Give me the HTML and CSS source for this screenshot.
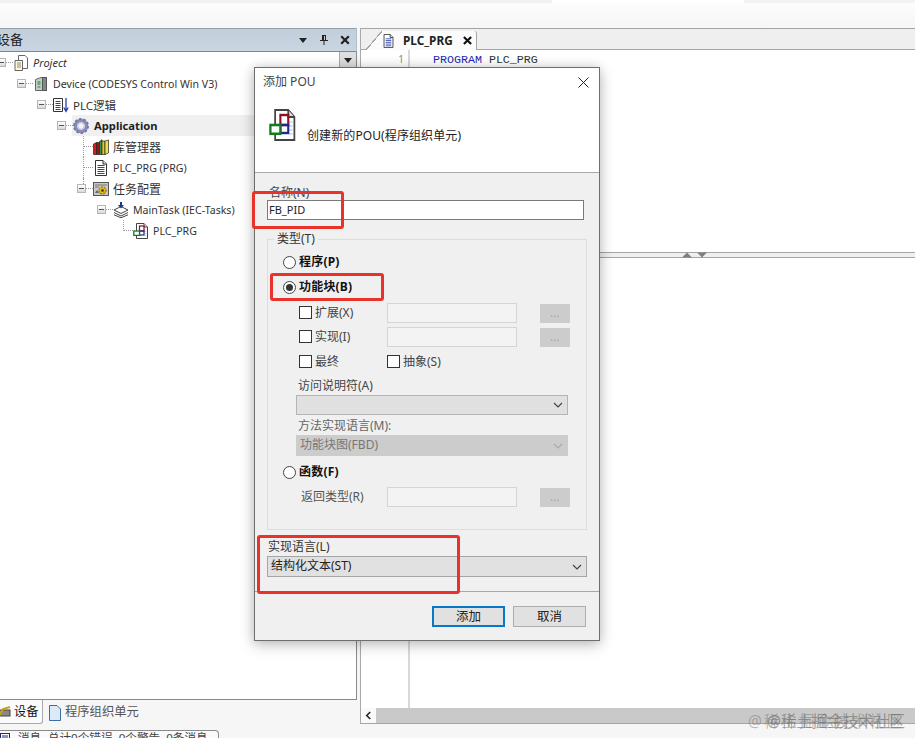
FILE: index.html
```html
<!DOCTYPE html>
<html lang="zh">
<head>
<meta charset="utf-8">
<title>添加 POU</title>
<link rel="stylesheet" href="styles.css">
</head>
<body>
<svg class="defs" width="0" height="0">
  <defs>
    <symbol id="doc" viewBox="0 0 16 16" preserveAspectRatio="none">
      <path d="M2.5 .5H10L13.5 4V15.5H2.5Z" fill="#fff" stroke="#333"/>
      <path d="M10 .5V4H13.5" fill="#ddd" stroke="#333"/>
      <path d="M4.5 5.5H11.5M4.5 7.5H11.5M4.5 9.5H11.5M4.5 11.5H11.5M4.5 13.5H11.5" stroke="#2a3fb0"/>
    </symbol>
    <symbol id="fb" viewBox="0 0 16 16" preserveAspectRatio="none">
      <path d="M3.5 .5H11L14.5 4V15.5H3.5Z" fill="#fff" stroke="#444"/>
      <path d="M11 .5V4H14.5" fill="#ddd" stroke="#444"/>
      <path d="M11.500 6.500H13.500M11.500 8.500H13.500M11.500 10.500H13.500M11.500 12.500H13.500" stroke="#b7b3d8" stroke-width=".6"/>
      <rect x="6.5" y="3" width="4.5" height="5" fill="none" stroke="#8a1220" stroke-width="1.2"/>
      <rect x="6.5" y="8" width="4.5" height="4" fill="none" stroke="#1c2a90" stroke-width="1.2"/>
      <rect x=".8" y="8" width="5.7" height="4.4" fill="#fff" stroke="#157a1e" stroke-width="1.3"/>
    </symbol>
  </defs>
</svg>

<div class="app">
  <div class="topstrip"></div>
  <div class="main">
    <section class="left">
      <header class="panel-head">
        <span class="panel-title">设备</span>
        <span class="panel-tools">
          <svg class="tool" viewBox="0 0 10 10" width="10" height="10"><path d="M1 3H9L5 8Z" fill="#222"/></svg>
          <svg class="tool" viewBox="0 0 10 12" width="10" height="12"><path d="M3 1H7V6H9V7H5.5V11H4.5V7H1V6H3ZM6 2H5V6H6Z" fill="#222"/></svg>
          <svg class="tool" viewBox="0 0 10 10" width="10" height="10"><path d="M1.2 1.2L8.8 8.8M8.8 1.2L1.2 8.8" stroke="#222" stroke-width="2.2"/></svg>
        </span>
      </header>
      <div class="tree">
        <button class="tree-drop"><svg viewBox="0 0 10 10" width="10" height="10"><path d="M1 3H9L5 8Z" fill="#222"/></svg></button>
        <div class="row l0"><i class="exp"></i><i class="conn"></i>
          <svg class="ic" viewBox="0 0 16 16"><path d="M5.500 .5H12L14.500 3V13.500H5.500Z" fill="#fff" stroke="#666"/><path d="M2 5.500H9.500V15.500H2Z" fill="#fff8dc" stroke="#666"/><path d="M4 8H8M4 10H8M4 12H8" stroke="#888"/></svg>
          <span class="it">Project</span></div>
        <div class="row l1"><i class="exp"></i><i class="conn"></i>
          <svg class="ic" viewBox="0 0 16 16"><path d="M2.500 3.500L8 1.500L13.500 1.500V14.500H2.500Z" fill="#c3ccc6" stroke="#666"/><rect x="9.500" y="1.500" width="4" height="13" fill="#7f8a88" stroke="#555"/><rect x="4.500" y="5" width="3" height="4" fill="#5fae78"/><path d="M4.500 11H7.500" stroke="#666"/></svg>
          <span class="lat">Device (CODESYS Control Win V3)</span></div>
        <div class="row l2"><i class="exp"></i><i class="conn"></i>
          <svg class="ic" viewBox="0 0 16 16"><path d="M.5 1.500H9.500V14.500H.5Z" fill="#fff" stroke="#333"/><path d="M2.500 4.500H7.500M2.500 6.500H7.500M2.500 8.500H7.500M2.500 10.500H7.500M2.500 12.500H7.500" stroke="#2a3fb0"/><path d="M13 1V13M10.800 10.500L13 14.500L15.200 10.500" fill="none" stroke="#2a3fb0" stroke-width="1.300"/></svg>
          <span class="lat-cjk">PLC逻辑</span></div>
        <div class="row l3 sel"><i class="exp"></i><i class="conn"></i>
          <svg class="ic" viewBox="0 0 16 16"><circle cx="8" cy="8" r="5.500" fill="none" stroke="#8a8dbb" stroke-width="3.500"/><circle cx="8" cy="8" r="7" fill="none" stroke="#777aa8" stroke-width="2" stroke-dasharray="2.500 1.900"/><circle cx="8" cy="8" r="3.200" fill="#f3f3f3" stroke="#c4c6dc"/></svg>
          <span class="b">Application</span></div>
        <div class="row leaf l4 vert"><i class="conn"></i>
          <svg class="ic" viewBox="0 0 16 16"><path d="M.5 5L3.500 3.500V15.500H.5Z" fill="#d02020" stroke="#222" stroke-width=".7"/><path d="M3.500 3.500H6.500V15.500H3.500Z" fill="#a01414" stroke="#222" stroke-width=".7"/><path d="M6.500 2.500L9 .8V15.500H6.500Z" fill="#2a9a55" stroke="#222" stroke-width=".7"/><path d="M9 2H12V15.500H9Z" fill="#e2cc22" stroke="#222" stroke-width=".7"/><path d="M12 2L15.500 1V14L12 15.500Z" fill="#f0e04a" stroke="#222" stroke-width=".7"/></svg>
          <span class="cjk">库管理器</span></div>
        <div class="row leaf l4 vert"><i class="conn"></i>
          <svg class="ic"><use href="#doc"/></svg>
          <span class="lat">PLC_PRG (PRG)</span></div>
        <div class="row l4 vert-top"><i class="exp"></i><i class="conn"></i>
          <svg class="ic" viewBox="0 0 16 16"><rect x=".5" y="1.500" width="15" height="13" fill="#c9c9c2" stroke="#555"/><path d="M2 4H14M2 6H6" stroke="#777"/><circle cx="9.500" cy="9.500" r="3.600" fill="#e0b81c" stroke="#7a5c00" stroke-dasharray="2 1"/><circle cx="9.500" cy="9.500" r="1.300" fill="#333"/><path d="M2 12L4 9L6 12Z" fill="#666"/></svg>
          <span class="cjk">任务配置</span></div>
        <div class="row l5"><i class="exp"></i><i class="conn"></i>
          <svg class="ic" viewBox="0 0 16 16"><path d="M1 8L8 4.500L15 8L8 11.500Z" fill="#fff" stroke="#444"/><path d="M1 10.500L8 14L15 10.500M1 12.800L8 15.800L15 12.800" fill="none" stroke="#444"/><path d="M7 0H9V3H11L8 6.500L5 3H7Z" fill="#22357f"/></svg>
          <span class="lat">MainTask (IEC-Tasks)</span></div>
        <div class="row leaf l6 vert-half"><i class="conn"></i>
          <svg class="ic"><use href="#fb"/></svg>
          <span class="lat">PLC_PRG</span></div>
      </div>
      <nav class="left-tabs">
        <div class="ltab active">
          <svg class="ltab-ic cut" viewBox="0 0 14 14"><rect x="1" y="5" width="12" height="6" fill="#8a8a80" stroke="#444"/><path d="M2 11L6 4L13 2" fill="none" stroke="#c9a21c" stroke-width="2"/></svg>
          <span>设备</span></div>
        <div class="ltab">
          <svg class="ltab-ic" viewBox="0 0 14 16"><path d="M1.500 .5H9L12.500 4V15.500H1.500Z" fill="#dce9f7" stroke="#3a6ea5"/></svg>
          <span>程序组织单元</span></div>
      </nav>
    </section>

    <section class="right">
      <div class="tabbar">
        <div class="etab">
          <svg class="etab-ic"><use href="#doc"/></svg>
          <span class="etab-t">PLC_PRG</span>
          <svg viewBox="0 0 10 10" width="9" height="9"><path d="M1 1L9 9M9 1L1 9" stroke="#111" stroke-width="2.400"/></svg>
        </div>
      </div>
      <div class="code">
        <div class="gutter"><span>1</span></div>
        <div class="src"><span class="kw">PROGRAM</span> PLC_PRG</div>
      </div>
      <div class="splitter">
        <svg viewBox="0 0 10 6" width="10" height="6"><path d="M0 5.500H10L5 .5Z" fill="#808080"/></svg>
        <svg viewBox="0 0 10 6" width="10" height="6"><path d="M0 .5H10L5 5.500Z" fill="#808080"/></svg>
      </div>
      <div class="code lower">
        <div class="gutter"></div>
        <div class="src"></div>
      </div>
      <div class="hscroll">
        <span class="sbtn"><svg viewBox="0 0 8 10" width="7" height="9"><path d="M6 1L2 5L6 9" fill="none" stroke="#222" stroke-width="1.800"/></svg></span>
        <span class="strack"></span>
      </div>
    </section>
  </div>
  <footer class="status">
    <div class="msgtab">
      <svg class="msg-ic" viewBox="0 0 10 12"><rect x=".5" y=".5" width="9" height="11" fill="#fff" stroke="#1c2a70"/><path d="M2 3H8M2 5H8" stroke="#1c2a70"/></svg>
      <span>消息 -总计0个错误, 0个警告, 0条消息</span>
    </div>
  </footer>
</div>

<div class="watermark w1">@稀土掘金技术社区</div>
<div class="watermark w2">@稀土掘金技术社区</div>

<div class="dialog">
  <div class="dlg-head">
    <div class="dlg-title"><span>添加 POU</span>
      <svg viewBox="0 0 11 11" width="11" height="11"><path d="M.5 .5L10.500 10.500M10.500 .5L.5 10.500" stroke="#222" stroke-width="1"/></svg>
    </div>
    <div class="dlg-intro">
      <svg class="dlg-ic"><use href="#fb"/></svg>
      <span>创建新的POU(程序组织单元)</span>
    </div>
  </div>
  <div class="dlg-body">
    <label class="name-label">名称(N)</label>
    <div class="name-input">FB_PID</div>
    <div class="group">
      <span class="legend">类型(T)</span>
      <div class="radio-row first"><i class="radio"></i><b>程序(P)</b></div>
      <div class="radio-row second"><i class="radio on"></i><b>功能块(B)</b></div>
      <div class="sub first-sub">
        <span class="chk-cell"><i class="chk"></i><span>扩展(X)</span></span>
        <span class="fld"></span><span class="dots">...</span>
      </div>
      <div class="sub">
        <span class="chk-cell"><i class="chk"></i><span>实现(I)</span></span>
        <span class="fld"></span><span class="dots">...</span>
      </div>
      <div class="sub flags">
        <span class="chk-cell"><i class="chk"></i><span>最终</span></span>
        <span class="chk-cell"><i class="chk"></i><span>抽象(S)</span></span>
      </div>
      <div class="glabel">访问说明符(A)</div>
      <div class="gselect"><svg class="chev" viewBox="0 0 10 6" width="10" height="6"><path d="M1 1L5 5L9 1" fill="none" stroke="#444" stroke-width="1.200"/></svg></div>
      <div class="glabel muted second-label">方法实现语言(M):</div>
      <div class="gselect off"><span>功能块图(FBD)</span><svg class="chev" viewBox="0 0 10 6" width="10" height="6"><path d="M1 1L5 5L9 1" fill="none" stroke="#aaa" stroke-width="1.200"/></svg></div>
      <div class="radio-row third"><i class="radio"></i><b>函数(F)</b></div>
      <div class="sub ret">
        <span class="ret-label">返回类型(R)</span>
        <span class="fld"></span><span class="dots">...</span>
      </div>
    </div>
    <label class="lang-label">实现语言(L)</label>
    <div class="lang-select"><span>结构化文本(ST)</span><svg class="chev" viewBox="0 0 10 6" width="10" height="6"><path d="M1 1L5 5L9 1" fill="none" stroke="#444" stroke-width="1.200"/></svg></div>
    <div class="dlg-foot">
      <span class="btn primary">添加</span>
      <span class="btn">取消</span>
    </div>
  </div>
</div>

<div class="mark m1"></div>
<div class="mark m2"></div>
<div class="mark m3"></div>
</body>
</html>
```

FILE: styles.css
```css
* { box-sizing: border-box; }
html, body { margin: 0; height: 100%; }
body {
  width: 915px; height: 738px; overflow: hidden; position: relative;
  background: #f6f6f6; color: #1f1f1f;
  font: 12px/1.2 "Noto Sans", "Noto Sans CJK SC", sans-serif;
}
.defs { position: absolute; }
svg { display: block; flex: none; }
i { display: block; flex: none; }

.app { display: flex; flex-direction: column; height: 738px; }
.topstrip {
  height: 28px;
  background:
    linear-gradient(90deg, #f1f1f1 0 552px, #fff 552px 744px, #f3f3f3 744px) top / 100% 3px no-repeat,
    linear-gradient(#fdfdfd, #f6f6f6);
}
.main { display: flex; height: 696px; }

/* left panel */
.left { width: 357px; margin-right: 3px; display: flex; flex-direction: column; }
.panel-head {
  height: 24px; display: flex; align-items: center; justify-content: space-between;
  background: linear-gradient(#c2cfdb, #c9d5e0);
  border-top: 1px solid #93a0ab; border-bottom: 1px solid #7d8790; border-right: 1px solid #b5bfc8;
}
.panel-title { margin-left: -3px; font-size: 13px; color: #222; }
.panel-tools { display: flex; align-items: center; gap: 11px; margin-right: 6px; }
.tree {
  flex: 1; position: relative; overflow: hidden; background: #fff;
  border-right: 1px solid #8a8a8a; border-bottom: 1px solid #8a8a8a;
  font-size: 11.500px; color: #333;
}
.tree-drop {
  position: absolute; right: 0; top: 0; width: 17px; height: 17px; padding: 0;
  display: flex; align-items: center; justify-content: center;
  background: #dedede; border: 0; border-left: 1px solid #aaa; border-bottom: 1px solid #aaa;
}
.row { height: 21px; display: flex; align-items: center; position: relative; }
.l0 { margin-left: -3px; }
.l1 { margin-left: 17px; }
.l2 { margin-left: 37px; }
.l3 { margin-left: 57px; }
.l4 { margin-left: 77px; }
.l5 { margin-left: 97px; }
.l6 { margin-left: 117px; }
.exp {
  width: 9px; height: 9px; position: relative;
  border: 1px solid #b5b5b5; background: linear-gradient(#fff, #d9d9d9);
}
.exp::after { content: ""; position: absolute; left: 1px; right: 1px; top: 3px; height: 1px; background: #555; }
.conn { width: 7px; border-top: 1px dotted #999; }
.leaf .conn { width: 10px; margin-left: 6px; }
.ic { width: 16px; height: 16px; margin-right: 4px; }
.it { font-style: italic; font-size: 11px; }
.lat { font-size: 10.600px; padding-top: 2px; }
.lat-cjk { padding-top: 2px; }
.cjk { font-size: 12px; padding-top: 3px; }
.b { font-weight: 700; color: #222; font-size: 11.200px; }
.sel { background: linear-gradient(90deg, #fff 0 15px, #f0f0f0 15px); }
.sel .ic { margin-right: 5px; }
.vert::before, .vert-top::before, .vert-half::before {
  content: ""; position: absolute; left: 6px; top: 0; border-left: 1px dotted #999;
}
.vert::before { bottom: 0; }
.vert-top::before { height: 6px; }
.vert-half::before { height: 50%; }
.left-tabs { height: 24px; display: flex; align-items: flex-start; gap: 5px; font-size: 12.300px; }
.ltab { height: 24px; display: flex; align-items: center; gap: 3px; color: #555; padding-top: 1px; }
.ltab.active {
  width: 43px; background: #fbfbfb; color: #111;
  border-right: 1px solid #aaa; border-bottom: 1px solid #aaa; border-bottom-right-radius: 3px;
}
.ltab-ic { width: 14px; height: 16px; }
.cut { margin-left: -3px; }

/* right panel */
.right { flex: 1; display: flex; flex-direction: column; border-left: 1px solid #aaa; }
.tabbar {
  height: 22px; flex: none; background: #efefef; position: relative;
  border-top: 1px solid #a5a5a5; border-bottom: 1px solid #a5a5a5;
  padding-top: 2px; padding-left: 5px;
}
.etab {
  width: 111px; height: 19px; display: flex; align-items: center;
  background:
    linear-gradient(to top left, #fbfbfb calc(50% - .6px), #a5a5a5 calc(50% - .6px) calc(50% + .6px), transparent calc(50% + .6px)) left / 16px 100% no-repeat,
    linear-gradient(#fbfbfb, #fbfbfb) 16px 0 / 100% 100% no-repeat;
  border-right: 1px solid #a5a5a5;
  border-top-right-radius: 3px; padding-left: 16px;
}
.etab-ic { width: 13px; height: 14px; margin-right: 8px; }
.etab-t { font-weight: 700; color: #222; font-size: 11.800px; width: 60px; }
.code { flex: 1; display: flex; background: #fff; height: 203px; }
.code.lower { flex: none; height: 450px; }
.gutter {
  width: 49px; border-right: 2px solid #d8d8d8; color: #888; text-align: right; padding: 2px 4px 0 0;
  font-size: 10px; line-height: 14px;
}
.src { flex: 1; padding: 3px 0 0 23px; font: 11.650px/13px "Liberation Mono", monospace; color: #333; }
.kw { color: #1a2bb5; }
.splitter {
  height: 6px; flex: none; background: #efefef; display: flex; justify-content: center; gap: 5px;
  border-top: 1px solid #a5a5a5; border-bottom: 1px solid #a5a5a5;
  padding-left: 112px; align-items: center;
}
.hscroll { height: 16px; flex: none; display: flex; border-bottom: 1px solid #a5a5a5; background: #c9c9c9; }
.sbtn { width: 15px; background: #fafafa; display: flex; align-items: center; justify-content: center; }
.strack { flex: 1; }

.status { flex: 1; padding-top: 6px; overflow: hidden; }
.msgtab {
  width: 219px; height: 20px; display: flex; gap: 8px; padding-top: 0; align-items: flex-start;
  border: 1px solid #8a8a8a; border-left: 0; border-radius: 0 4px 0 0; font-size: 11.600px; color: #444;
  background: #fafafa; white-space: nowrap;
}
.msg-ic { width: 10px; height: 12px; margin-top: 2px; }

.watermark {
  position: absolute; top: 712px; font-size: 15.500px; line-height: 18px;
  white-space: nowrap; color: rgba(90, 90, 90, .55);
}
.w1 { left: 767px; }
.w2 { left: 748px; letter-spacing: 2px; color: rgba(110, 110, 110, .45); }

/* dialog */
.dialog {
  position: absolute; left: 254px; top: 67px; width: 346px; height: 574px;
  border: 1px solid #6e6e6e; background: #f0f0f0; color: #222;
  box-shadow: 0 4px 14px rgba(0, 0, 0, .22), 0 0 10px rgba(0, 0, 0, .12);
  font-size: 12px;
}
.dlg-head { height: 105px; background: #fff; border-bottom: 1px solid #a8a8a8; }
.dlg-title {
  height: 27px; display: flex; align-items: center; justify-content: space-between;
  padding: 1px 10px 0 8px; font-size: 12px; color: #444;
}
.dlg-intro { display: flex; align-items: flex-end; height: 46px; padding-left: 14px; }
.dlg-ic { width: 28px; height: 32px; margin-right: 10px; }
.dlg-intro span { margin-bottom: -2px; letter-spacing: .1px; }
.dlg-body { display: flex; flex-direction: column; height: 467px; }
.name-label { height: 14px; margin: 13px 0 0 14px; line-height: 14px; color: #444; }
.name-input {
  width: 317px; height: 20px; margin: 0 0 0 12px; background: #fff;
  border: 1px solid #7a7a7a; padding: 2px 1px 0; line-height: 14px; font-size: 11px;
}
.group {
  position: relative; width: 320px; height: 291px; margin: 19px 0 0 12px;
  border: 1px solid #dcdcdc; display: flex; flex-direction: column;
}
.legend { position: absolute; left: 6px; top: -8px; padding: 0 3px; background: #f0f0f0; line-height: 14px; color: #333; }
.radio-row { height: 20px; display: flex; align-items: center; padding-left: 15px; gap: 3px; flex: none; }
.radio-row b { color: #111; letter-spacing: .2px; }
.radio-row.first { margin-top: 12px; }
.radio-row.second { margin-top: 5px; }
.radio-row.third { margin-top: 6px; }
.radio { width: 13px; height: 13px; border: 1px solid #444; border-radius: 50%; background: #fff; position: relative; }
.radio.on::after { content: ""; position: absolute; inset: 2px; border-radius: 50%; background: #333; }
.sub { height: 20px; margin-top: 4px; display: flex; align-items: center; padding-left: 31px; flex: none; color: #444; }
.sub.first-sub { margin-top: 6px; }
.sub.flags { margin-top: 5px; }
.sub.ret { margin-top: 5px; padding-left: 33px; color: #555; }
.ret-label { width: 86px; }
.chk-cell { width: 88px; display: flex; align-items: center; gap: 3px; flex: none; }
.chk { width: 13px; height: 13px; border: 1px solid #333; background: #fff; }
.fld { width: 130px; height: 20px; background: #f3f3f3; border: 1px solid #d5d5d5; flex: none; }
.dots {
  width: 30px; height: 19px; margin-left: 23px; background: #cccccc; color: #999; flex: none;
  text-align: center; font-size: 10px; line-height: 19px; letter-spacing: .5px;
}
.glabel { height: 14px; margin: 7px 0 0 30px; line-height: 14px; color: #444; flex: none; }
.glabel.muted { color: #666; }
.second-label { margin-top: 4px; }
.gselect {
  width: 272px; height: 20px; margin: 2px 0 0 28px; flex: none; display: flex; align-items: center; justify-content: space-between;
  background: #e0e0e0; border: 1px solid #b5b5b5; padding: 0 4px 0 3px;
}
.gselect .chev { margin-left: auto; }
.gselect.off { background: #cccccc; border-color: #cccccc; height: 21px; color: #777; }
.lang-label { height: 14px; margin: 10px 0 0 13px; line-height: 14px; color: #333; flex: none; }
.lang-select {
  width: 320px; height: 21px; margin: 2px 0 0 12px; flex: none;
  display: flex; align-items: center; justify-content: space-between;
  background: #e1e1e1; border: 1px solid #a5a5a5; padding: 0 4px 0 3px; color: #222;
}
.dlg-foot {
  margin-top: 14px; border-top: 1px solid #a8a8a8; padding: 14px 13px 0 0;
  display: flex; justify-content: flex-end; gap: 8px;
}
.btn {
  width: 73px; height: 21px; background: #e1e1e1; border: 1px solid #adadad;
  text-align: center; line-height: 19px; font-size: 12.500px; color: #222;
}
.btn.primary { border: 2px solid #0a78c8; line-height: 17px; }

/* red annotation boxes */
.mark { position: absolute; border: 3px solid #e8322a; border-radius: 3px; }
.m1 { left: 252px; top: 191px; width: 92px; height: 38px; }
.m2 { left: 270px; top: 273px; width: 114px; height: 28px; }
.m3 { left: 257px; top: 535px; width: 203px; height: 59px; }
```
